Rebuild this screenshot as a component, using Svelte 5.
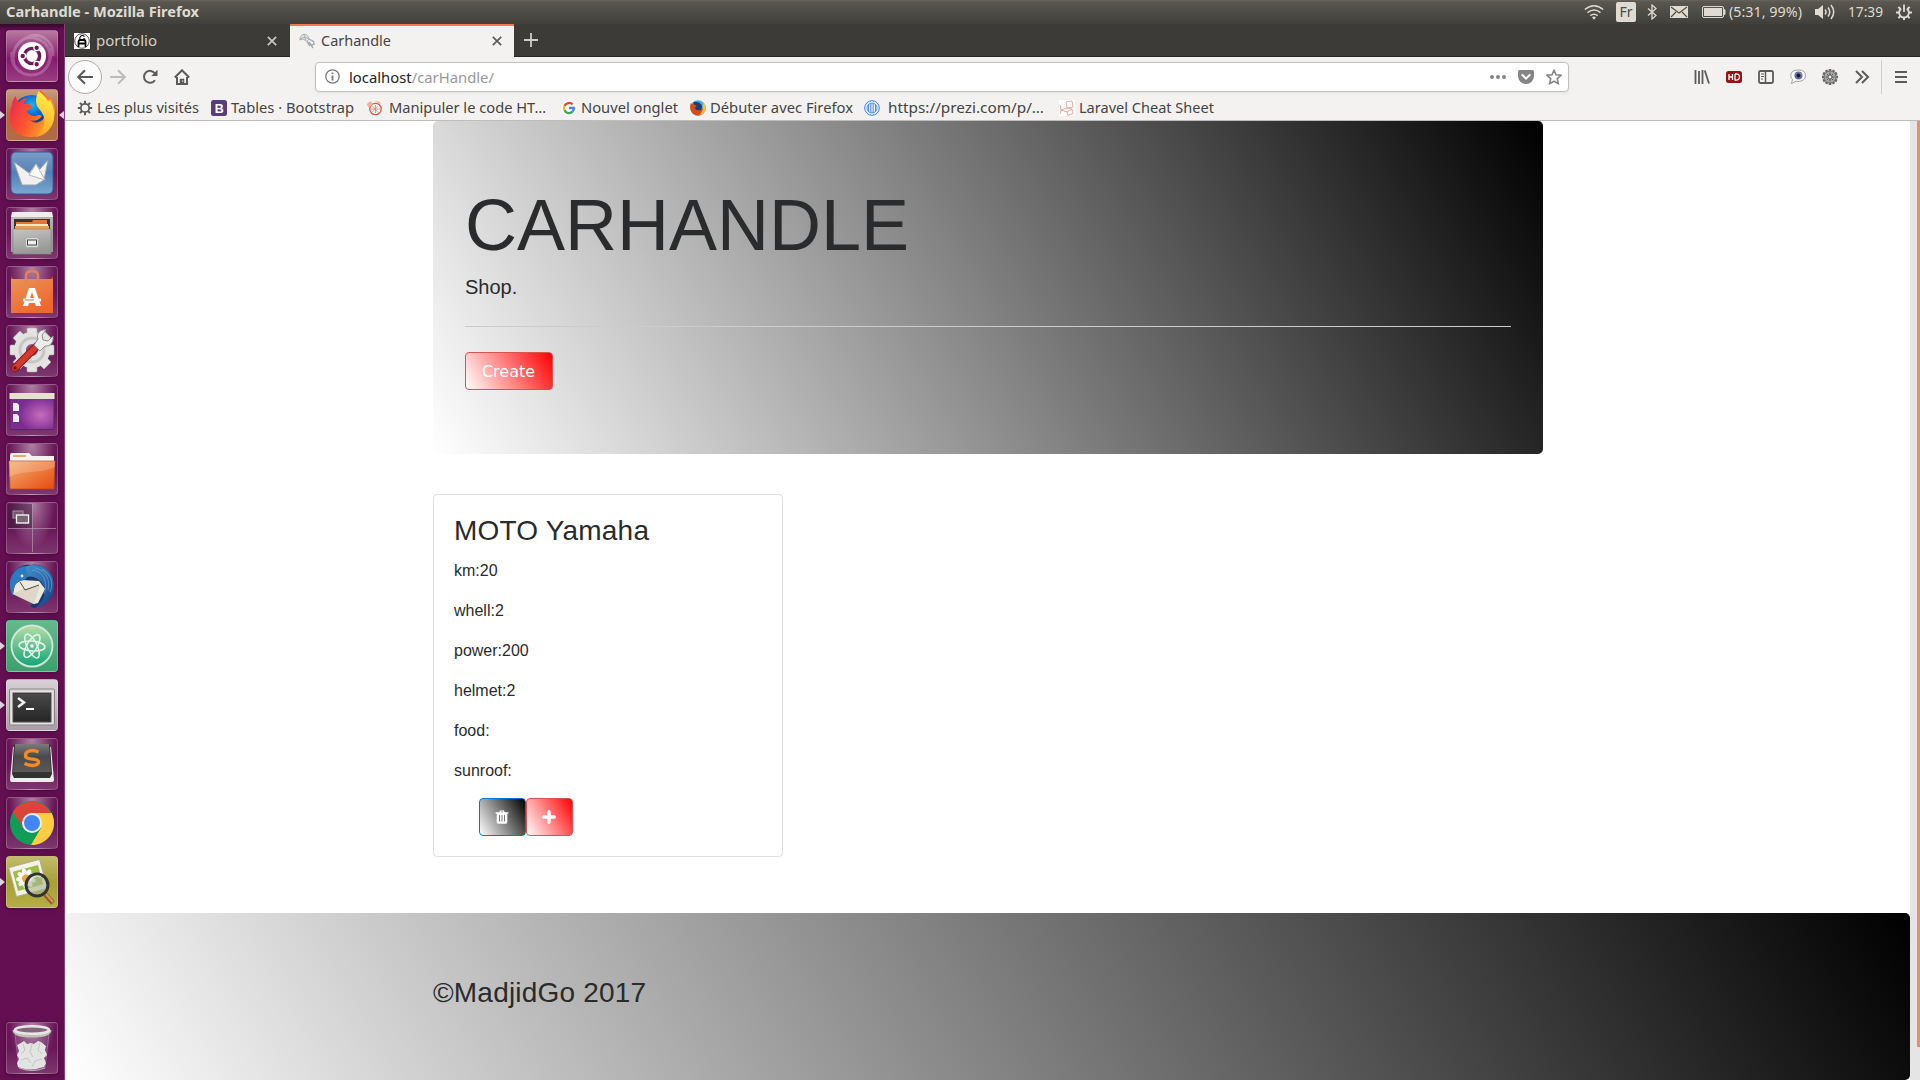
<script>
  const launchers = [
    { id: 'dash', kind: 'dash' },
    { id: 'firefox', kind: 'brown', running: true, focused: true },
    { id: 'boat' },
    { id: 'files' },
    { id: 'software' },
    { id: 'settings' },
    { id: 'desktop' },
    { id: 'folder' },
    { id: 'workspace' },
    { id: 'thunderbird' },
    { id: 'atom', kind: 'green', running: true },
    { id: 'terminal', kind: 'silver', running: true },
    { id: 'sublime' },
    { id: 'chrome' },
    { id: 'viewer', kind: 'olive', running: true }
  ];

  const bookmarks = [
    { icon: 'gear', text: 'Les plus visités', width: 102, slot: 134 },
    { icon: 'bootstrap', text: 'Tables · Bootstrap', width: 123, slot: 155 },
    { icon: 'oc', text: 'Manipuler le code HT…', width: 157, slot: 195, gap: 7 },
    { icon: 'google', text: 'Nouvel onglet', width: 97, slot: 129 },
    { icon: 'firefox', text: 'Débuter avec Firefox', width: 143, slot: 174 },
    { icon: 'prezi', text: 'https://prezi.com/p/…', width: 156, slot: 195, gap: 8 },
    { icon: 'laravel', text: 'Laravel Cheat Sheet', width: 135, slot: 160 }
  ];

  const specs = ['km:20', 'whell:2', 'power:200', 'helmet:2', 'food:', 'sunroof:'];
  const teeth = [0, 45, 90, 135, 180, 225, 270, 315];
  const fineTeeth = [0, 30, 60, 90, 120, 150, 180, 210, 240, 270, 300, 330];
  const petals = [0, 40, 80, 120, 160, 200, 240, 280, 320];
</script>

{#snippet label(text, width, tone = 'ink')}
  <svg class="label {tone}" {width} height="20"><text x="0" y="15" textLength={width} lengthAdjust="spacingAndGlyphs">{text}</text></svg>
{/snippet}

{#snippet firefoxLogo()}
  <circle cx="26" cy="26" r="20" fill="url(#ffBlue)" />
  <path d="M6 16C6 12 8 9 10 7c0 3 1 5 3 6 2-2 5-4 8-4-2 2-3 4-3 6 3 0 6 0 8 2-1 3-4 4-6 6 3 1 4 4 8 4 3 0 6-2 8 0-3 4-8 6-12 4 4 4 11 3 14-2 4-6 1-14-5-19-1-5 0-7 1-9 3 3 7 6 9 9l1-2c4 6 6 12 4 20-2 11-10 20-22 20C12 48 3 40 4 28c0-5 0-8 2-12z" fill="url(#ffFlame)" />
  <path d="M33 2c3 3 7 6 9 10l2-1c5 9 6 19 1 27-4 6-9 9-15 10 8-7 11-17 6-24-2-4-6-6-6-12 0-4 1-7 3-10z" fill="url(#ffYellow)" />
{/snippet}

{#snippet launcherIcon(id)}
  <svg class="art" viewBox="0 0 52 52">
    {#if id === 'dash'}
      <path d="M8 34C4 16 18 2 34 10c10 5 12 16 8 24M44 18c4 14-6 28-20 27C12 44 4 34 6 22M20 8c14-8 28 4 27 18" fill="none" stroke="#fff" stroke-opacity=".22" stroke-width="3" />
      <circle cx="26" cy="26" r="14" fill="#fff" />
      <circle cx="26" cy="26" r="7.600" fill="none" stroke="#6d1b59" stroke-width="3.400" />
      <g fill="#6d1b59" stroke="#fff" stroke-width="1.200">
        <circle cx="16.700" cy="26" r="2.800" /><circle cx="30.700" cy="17.800" r="2.800" /><circle cx="30.700" cy="34.200" r="2.800" />
      </g>
    {:else if id === 'firefox'}
      {@render firefoxLogo()}
    {:else if id === 'boat'}
      <rect x="5" y="4" width="42" height="42" rx="5" fill="url(#boatBg)" stroke="#2e5c9b" />
      <path d="M8 14l15 11 7-9 4 5 8-9-4 20-8 5H16z" fill="#f0f0ee" stroke="#9aa5b0" />
      <path d="M23 27l7-11 9 16z" fill="#fbfbfa" stroke="#b0b8bf" />
    {:else if id === 'files'}
      <path d="M7 5h38l2 6v34H5V11z" fill="url(#metal)" />
      <path d="M6 5h40l1 5H5z" fill="#eee" />
      <rect x="8" y="12" width="36" height="11" fill="#383432" />
      <path d="M10 15h16l1-2h14v8H10z" fill="#df7640" />
      <path d="M10 17h32v4H10z" fill="#f7e6c8" /><path d="M9 19h34v4H9z" fill="#ea9e51" />
      <path d="M7 22h38v25H7z" fill="url(#metal)" stroke="#888" stroke-width=".7" />
      <rect x="19.500" y="30.500" width="13" height="10" rx="2" fill="#ddd" stroke="#aaa" />
      <rect x="21.500" y="33" width="9" height="5" fill="#eee" stroke="#444" />
    {:else if id === 'software'}
      <path d="M5 10l4 4H5zm42 0l-4 4h4z" fill="#b8431c" />
      <rect x="5" y="13" width="42" height="34" fill="url(#bag)" />
      <path d="M20 17v-7q0-5 6-5t6 5v7" fill="none" stroke="#e68157" stroke-width="2.500" />
      <path d="M17 40h5l1-3h6l1 3h5L29 22h-6zm7-8l2-6 2 6z" fill="#fff" />
      <path d="M17 34h18" stroke="#fff" stroke-width="3" /><path d="M19 34h9" stroke="#f07337" />
    {:else if id === 'settings'}
      <g fill="#e5e5e3" stroke="#a8a8a6" stroke-width=".6">
        {#each teeth as a}<rect x="21" y="3" width="10" height="12" rx="1" transform="rotate({a} 26 25)" />{/each}
      </g>
      <circle cx="26" cy="25" r="12" fill="none" stroke="#e2e2e0" stroke-width="12" />
      <circle cx="26" cy="25" r="12" fill="none" stroke="#c6c6c4" stroke-width="3" />
      <path d="M9 43L31 21" stroke="#871b17" stroke-width="8" stroke-linecap="round" />
      <path d="M9 43L31 21" stroke="#d3392f" stroke-width="6" stroke-linecap="round" />
      <path d="M28 20l6 6 5-5c5 1 9-4 8-10l-5 5-5-1-1-5 4-5c-6-1-10 4-8 9z" fill="#ededeb" stroke="#8d8d8b" />
      <circle cx="9" cy="43" r="1.800" fill="#701514" />
    {:else if id === 'desktop'}
      <rect x="4" y="9.500" width="44" height="36" rx="1" fill="url(#desk)" stroke="#5c2468" />
      <rect x="3.500" y="9" width="45" height="6" fill="#e4e2cd" />
      <path d="M7 19h4l2 2v6H7zm0 11h4l2 2v6H7z" fill="#eee" />
    {:else if id === 'folder'}
      <path d="M4 12q0-2 2-2h17l3 3h22v10H4z" fill="#f4f3f1" /><path d="M7 12h13v2H7z" fill="#efa477" />
      <path d="M3 18h46l-1 28H4z" fill="url(#folder)" stroke="#b84818" stroke-width=".7" />
      <path d="M3 18h46v6C34 31 16 27 3 34z" fill="#fff" opacity=".18" />
    {:else if id === 'workspace'}
      <path d="M2 2h24v24H2z" fill="#3c1735" opacity=".5" />
      <path d="M26.500 2v48M2 26.500h48" stroke="#b794b0" stroke-opacity=".7" />
      <rect x="7" y="9" width="10" height="7" fill="#74566f" stroke="#a493a1" />
      <rect x="10.500" y="13" width="12" height="8" fill="#796475" stroke="#fff" stroke-width="1.300" />
    {:else if id === 'thunderbird'}
      <path d="M6 14C10 8 16 3 24 4c12-3 23 6 24 20 0 11-6 20-20 23l-4-2 8-6L9 20z" fill="#17386f" />
      <path d="M11 20c-1-7 3-13 10-15 14-4 26 4 27 18 1 12-6 21-18 24 8-8 11-16 7-23-3-6-10-10-16-8-2 3-5 5-10 4z" fill="url(#bird)" />
      <path d="M9 23l7-4 17 1 6 8-7 14-4 1-21-10z" fill="#eee9df" />
      <path d="M7 33l10-5 17-3-6 18z" fill="#ddd6c9" />
      <path d="M14 21l5 8 14-5" fill="none" stroke="#4d4944" stroke-width="1" />
      <path d="M19 5c-9 1-16 10-15 20 0 4 1 7 3 10 0-7 2-12 6-15 4 0 8-2 9-6z" fill="#2f7abf" />
      <path d="M29 7c9 2 16 10 13 22M26 9c11 1 17 12 12 24M36 8c8 5 12 13 8 23" fill="none" stroke="#7fbbe8" stroke-opacity=".45" stroke-width="1.200" />
      <circle cx="16" cy="15" r="1.400" fill="#e8eef5" />
    {:else if id === 'atom'}
      <circle cx="26" cy="26" r="20.500" fill="url(#atomBg)" stroke="#d4e8d7" stroke-width="1.800" />
      <g fill="none" stroke="#e4f8ed" stroke-width="1.500">
        <ellipse cx="26" cy="26" rx="13" ry="5" transform="rotate(5 26 26)" />
        <ellipse cx="26" cy="26" rx="13" ry="5" transform="rotate(64 26 26)" />
        <ellipse cx="26" cy="26" rx="13" ry="5" transform="rotate(121 26 26)" />
      </g><circle cx="26" cy="26" r="1.800" fill="#fff" />
    {:else if id === 'terminal'}
      <rect x="3.500" y="10" width="45" height="36" rx="1" fill="#d6d6d4" stroke="#8a8588" />
      <rect x="6" y="13" width="40" height="31" fill="#3d3e3d" stroke="#f3f3f1" />
      <rect x="8" y="15" width="36" height="27" fill="url(#term)" />
      <path d="M12 19l6 4.500-6 4.500" fill="none" stroke="#f2f2f0" stroke-width="2.500" /><path d="M20 30h8" stroke="#fff" stroke-width="2" />
    {:else if id === 'sublime'}
      <path d="M7 9h38l3 33q0 2-2 2H6q-2 0-2-2z" fill="#eeedec" />
      <path d="M8 6h36l2 30-2 4H8l-2-4z" fill="#353332" />
      <path d="M9 6h34l2 28H7z" fill="url(#key)" />
      <path d="M32.500 14c-7-3-13-1-13 3.500 0 5.500 13 2 13 6.500 0 4-8 4.500-14 1.500" fill="none" stroke="#f38a27" stroke-width="3.400" />
    {:else if id === 'chrome'}
      <circle cx="26" cy="26" r="22" fill="#0f9d58" />
      <path d="M7 15a22 22 0 0 1 38 1H26l-9 15z" fill="#db4437" />
      <path d="M26 16h19.600A22 22 0 0 1 25 48l10-17z" fill="#ffcd40" />
      <circle cx="26" cy="26" r="10" fill="#f1f1f1" /><circle cx="26" cy="26" r="8" fill="#4285f4" />
    {:else if id === 'viewer'}
      <g transform="rotate(-15 22 22)">
        <rect x="6" y="7" width="32" height="30" fill="#f3f2e8" stroke="#b2ac8f" />
        <rect x="9" y="12" width="26" height="20" fill="#9ebd47" />
        {#each petals as a}<ellipse cx="20" cy="17" rx="2.500" ry="5" fill="#fff" transform="rotate({a} 20 22)" />{/each}
        <circle cx="20" cy="22" r="4" fill="#f3a728" />
      </g>
      <path d="M39 38l8 9" stroke="#965c29" stroke-width="5" /><path d="M40 38l7 8" stroke="#d79b5c" stroke-width="2" />
      <circle cx="31" cy="29" r="11" fill="#a9b490" fill-opacity=".6" stroke="#2f3231" stroke-width="3" />
      <path d="M24 25a8 8 0 0 1 11-4" fill="none" stroke="#fff" stroke-opacity=".5" stroke-width="2" />
    {:else if id === 'trash'}
      <path d="M9 12h34l-4 34q-13 5-26 0z" fill="#fff" fill-opacity=".08" stroke="#d7c8d4" stroke-opacity=".35" />
      <path d="M11 23l4-2 3-2 3 3 4-1 3 1 4-3 3 1 5 4-1 4 2 5-3 3 2 5-2 4-4 1q-9 3-19 0l-3-1-1-4 2-4-2-4 2-4z" fill="#e2e4e1" />
      <path d="M17 22l2 6-4 4M26 22l-2 8 3 5M34 21l-2 7 4 4M15 38l6-2 4 5M36 37l-7 2-3 6" fill="none" stroke="#c3c5c1" stroke-width="1" />
      <path d="M13 46q13 5 26 0" fill="none" stroke="#c8c9c4" stroke-opacity=".7" />
      <path d="M8 8q0 6 18 6t18-6" fill="none" stroke="#bfc3bc" stroke-width="3" />
      <ellipse cx="26" cy="8" rx="17" ry="3.800" fill="#86657f" stroke="#e6e9e4" stroke-width="2.600" />
    {/if}
  </svg>
{/snippet}

<svg class="defs" width="0" height="0" aria-hidden="true">
  <defs>
    <radialGradient id="ffBlue" cx=".5" cy=".25"><stop offset="0" stop-color="#22b5ec" /><stop offset=".5" stop-color="#0a6bd6" /><stop offset="1" stop-color="#123079" /></radialGradient>
    <linearGradient id="ffFlame" x1="0" y1=".3" x2="1" y2=".8"><stop offset="0" stop-color="#e82d4b" /><stop offset=".45" stop-color="#ff562d" /><stop offset="1" stop-color="#ffbd27" /></linearGradient>
    <linearGradient id="ffYellow" x1=".5" y1="0" x2=".3" y2="1"><stop offset="0" stop-color="#fff44a" /><stop offset="1" stop-color="#ff9f20" /></linearGradient>
    <linearGradient id="boatBg" x2="0" y2="1"><stop offset="0" stop-color="#7c9cc8" /><stop offset=".5" stop-color="#5580b5" /><stop offset="1" stop-color="#7ba8d2" /></linearGradient>
    <linearGradient id="metal" x2=".3" y2="1"><stop offset="0" stop-color="#c5c5c3" /><stop offset="1" stop-color="#989896" /></linearGradient>
    <linearGradient id="bag" x2=".6" y2="1"><stop offset="0" stop-color="#e99456" /><stop offset="1" stop-color="#ef672d" /></linearGradient>
    <radialGradient id="desk" cx=".7" cy=".6"><stop offset="0" stop-color="#c66cbd" /><stop offset="1" stop-color="#7b2c91" /></radialGradient>
    <linearGradient id="folder" x2="1" y2="1"><stop offset="0" stop-color="#f3b172" /><stop offset="1" stop-color="#e8480e" /></linearGradient>
    <linearGradient id="bird" x2="1" y2="1"><stop offset="0" stop-color="#4c9bd7" /><stop offset="1" stop-color="#153c83" /></linearGradient>
    <linearGradient id="atomBg" x2="0" y2="1"><stop offset="0" stop-color="#b6dda7" /><stop offset="1" stop-color="#12a477" /></linearGradient>
    <linearGradient id="term" x2="0" y2="1"><stop offset="0" stop-color="#484948" /><stop offset="1" stop-color="#252625" /></linearGradient>
    <linearGradient id="key" x2="0" y2="1"><stop offset="0" stop-color="#7b7979" /><stop offset=".45" stop-color="#4b4a4a" /><stop offset="1" stop-color="#5b5959" /></linearGradient>
  </defs>
</svg>

<div class="screen">
  <header class="panel">
    <div class="window-title">{@render label('Carhandle - Mozilla Firefox', 193, 'light bold')}</div>
    <div class="tray">
      <svg class="wifi" width="20" height="16" viewBox="0 0 20 16" fill="none" stroke="#dfdbd2" stroke-width="1.500"><path d="M.8 5.500Q10-2 19.200 5.500M3.500 8.600q6.500-5.200 13 0M6.300 11.600q3.700-2.800 7.400 0" /><path d="M8 13.200q2-1.500 4 0l-2 2.600z" fill="#dfdbd2" stroke="none" /></svg>
      <div class="lang">Fr</div>
      <svg class="bt" width="10" height="16" viewBox="0 0 10 16" fill="none" stroke="#dfdbd2" stroke-width="1.300"><path d="M1 4.500l8 7L5 15V1l4 3.500-8 7" /></svg>
      <svg class="mail" width="18" height="12" viewBox="0 0 18 12"><rect width="18" height="12" fill="#dfdbd2" /><path d="M1 1l8 6 8-6M1 11l5-5M17 11l-5-5" fill="none" stroke="#504e47" stroke-width="1.200" /></svg>
      <svg class="batt" width="24" height="12" viewBox="0 0 24 12"><rect x=".5" y=".5" width="21" height="11" rx="1.500" fill="none" stroke="#dfdbd2" /><rect x="2" y="2" width="18" height="8" fill="#dfdbd2" /><path d="M22 3q1.500 0 1.500 1.500v3Q23.500 9 22 9z" fill="#dfdbd2" /></svg>
      <div class="batt-text">{@render label('(5:31, 99%)', 73, 'light')}</div>
      <svg class="vol" width="20" height="16" viewBox="0 0 20 16"><path d="M0 5h3l5-4v14l-5-4H0z" fill="#dfdbd2" /><path d="M10 5.500q2 2.500 0 5M13 3.500q3.500 4.500 0 9M16 1q5.500 7 0 14" fill="none" stroke="#dfdbd2" stroke-width="1.500" /></svg>
      <div class="clock">{@render label('17:39', 35, 'light')}</div>
      <svg class="power" width="16" height="16" viewBox="0 0 16 16" stroke="#dfdbd2" fill="none"><path d="M5.200 4.600a4.900 4.900 0 1 0 5.600 0" stroke-width="1.900" />{#each teeth.slice(1) as a}<path d="M8 .5v3" stroke-width="2" transform="rotate({a} 8 8.500)" />{/each}<path d="M8 .5v7.500" stroke-width="1.800" /></svg>
    </div>
  </header>

  <div class="workspace">
    <nav class="dock">
      {#each launchers as app}
        <div class="tile {app.kind ?? 'glass'}" class:running={app.running} class:focused={app.focused}>
          {@render launcherIcon(app.id)}
        </div>
      {/each}
      <div class="tile glass bin">{@render launcherIcon('trash')}</div>
    </nav>

    <div class="browser">
      <div class="tabs">
        <div class="tab">
          <svg width="16" height="16" viewBox="0 0 16 16"><rect width="16" height="16" fill="#fff" /><circle cx="8" cy="8" r="7.300" fill="none" stroke="#555" /><path d="M4.500 14V9q0-2 1.500-2h4q1.500 0 1.500 2v5M4.500 10.500h7" fill="none" stroke="#000" stroke-width="1.800" /><path d="M10.500 3.500q-2.500-2-4 0t0 3h3.500V5" fill="none" stroke="#000" stroke-width="1.200" /></svg>
          {@render label('portfolio', 61, 'pale')}
          <svg class="close" width="10" height="10" viewBox="0 0 10 10"><path d="M.8.8l8.400 8.400M9.200.8L.8 9.200" stroke="#c9c7c0" stroke-width="1.700" /></svg>
        </div>
        <div class="tab active">
          <svg width="16" height="16" viewBox="0 0 16 16" fill="none" stroke="#a3abb1" stroke-width=".9"><path d="M.8 7Q1 2 5 1.200 9 1 10 6L8 8.500 4 6z" fill="#e3e6e8" /><path d="M1 6l5-2 4 2M5 1.500L6.500 7" /><path d="M8 8.500l3 4.500M10 6l4.500 2.500.5 3-3 .5-2-3M12 12l2 3" stroke-width="1.400" /></svg>
          {@render label('Carhandle', 70)}
          <svg class="close" width="10" height="10" viewBox="0 0 10 10"><path d="M.8.8l8.400 8.400M9.200.8L.8 9.200" stroke="#5c5b58" stroke-width="1.700" /></svg>
        </div>
        <svg class="plus" width="14" height="14" viewBox="0 0 14 14"><path d="M7 0v14M0 7h14" stroke="#d0cec8" stroke-width="1.800" /></svg>
      </div>

      <div class="toolbar">
        <div class="back"><svg width="16" height="16" viewBox="0 0 16 16" fill="none" stroke="#5b5b59" stroke-width="2"><path d="M16 8H1.500M8 1.200L1.200 8 8 14.800" /></svg></div>
        <svg class="nav" width="16" height="16" viewBox="0 0 16 16" fill="none" stroke="#bdbcba" stroke-width="2"><path d="M0 8h14.500M8 1.200L14.800 8 8 14.800" /></svg>
        <svg class="nav" width="16" height="16" viewBox="0 0 16 16"><path d="M13 11.200A6 6 0 1 1 13 4.500" fill="none" stroke="#5b5b59" stroke-width="2" /><path d="M15.500.8V7H9.300z" fill="#5b5b59" /></svg>
        <svg class="nav" width="16" height="16" viewBox="0 0 16 16" fill="none" stroke="#5b5b59" stroke-width="2"><path d="M.8 8.500L8 1.300l7.200 7.200M3 8v7h10V8" /><path d="M6 15v-5h4v5z" fill="#5b5b59" stroke-width=".5" /><path d="M8.700 11.500v1.200" stroke="#fff" stroke-width="1" /></svg>
        <div class="address">
          <svg width="15" height="15" viewBox="0 0 15 15"><circle cx="7.500" cy="7.500" r="6.700" fill="none" stroke="#777" stroke-width="1.200" /><path d="M7.500 6.500v5M7.500 3.500v1.600" stroke="#777" stroke-width="1.800" /></svg>
          <svg class="label url" width="145" height="20"><text x="0" y="16" textLength="145" lengthAdjust="spacingAndGlyphs">localhost<tspan>/carHandle/</tspan></text></svg>
          <div class="actions">
            <svg width="16" height="16" viewBox="0 0 16 16" fill="#858585"><circle cx="2" cy="8" r="2" /><circle cx="8" cy="8" r="2" /><circle cx="14" cy="8" r="2" /></svg>
            <svg width="16" height="16" viewBox="0 0 16 16"><path d="M1.500 1h13Q16 1 16 2.500V7a8 8 0 0 1-16 0V2.500Q0 1 1.500 1z" fill="#858585" /><path d="M4.300 6L8 9.500 11.700 6" fill="none" stroke="#fff" stroke-width="2" stroke-linecap="round" /></svg>
            <svg width="16" height="16" viewBox="0 0 16 16"><path d="M8 1.300l2 4.500 5 .5-3.700 3.300 1 5L8 12.200l-4.300 2.400 1-5L1 6.300l5-.5z" fill="none" stroke="#858585" stroke-width="1.600" /></svg>
          </div>
        </div>
        <div class="addons">
          <svg width="16" height="16" viewBox="0 0 16 16" stroke="#5b5b59" stroke-width="1.800"><path d="M1.500 1v14M5 2v13M8.500 1v14M10.800 1.500L15 14.500" /></svg>
          <svg width="16" height="16" viewBox="0 0 16 16"><rect y="2" width="16" height="12" rx="2.500" fill="#931414" /><path d="M3 5v6M6.500 5v6M3 8h3.500M9 5v6q4.500.500 4.500-3T9 5" fill="none" stroke="#fff" stroke-width="1.300" /></svg>
          <svg width="16" height="16" viewBox="0 0 16 16" fill="none" stroke="#5b5b59"><rect x="1" y="2" width="14" height="12" rx="1.500" stroke-width="1.800" /><path d="M7.500 2v12" stroke-width="1.500" /><path d="M3 5h3M3 7.500h3M3 10h2" /></svg>
          <svg width="16" height="16" viewBox="0 0 16 16"><path d="M8.500 1q7 0 7 5.500T8 12.500q-1 0-2-.3L1.500 14.500l1-4Q.8 9 .8 6.500.8 1 8.500 1z" fill="#fff" stroke="#9f9f9d" /><circle cx="8.500" cy="6.500" r="4" fill="#5f6ea3" /><circle cx="8.500" cy="6.500" r="2" fill="#201c27" /><path d="M9.500 4q2 0 2 2" stroke="#d88962" fill="none" /></svg>
          <svg width="16" height="16" viewBox="0 0 16 16">{#each fineTeeth as a}<path d="M8 0v4" stroke="#666" stroke-width="2.600" transform="rotate({a} 8 8)" />{/each}<circle cx="8" cy="8" r="6" fill="#a8a8a6" stroke="#6f6f6d" /><circle cx="8" cy="8" r="2" fill="#f1f1f0" stroke="#555" /><path d="M3.500 8H6M10 8h2.500M8 3.500V6M8 10v2.500M5 5l1.500 1.500M11 5L9.500 6.500M5 11l1.500-1.500M11 11L9.500 9.500" stroke="#5a5a58" /></svg>
          <svg width="16" height="16" viewBox="0 0 16 16" fill="none" stroke="#5b5b59" stroke-width="2"><path d="M2 2l6 6-6 6M8 2l6 6-6 6" /></svg>
        </div>
        <div class="divider"></div>
        <svg class="menu" width="12" height="14" viewBox="0 0 12 14" stroke="#5b5b59" stroke-width="2"><path d="M0 2h12M0 7h12M0 12h12" /></svg>
      </div>

      <div class="bookmarks">
        {#each bookmarks as b}
          <svg class="slot" width={b.slot} height="20">
            <svg y="2" width="16" height="16" viewBox="0 0 16 16">
              {#if b.icon === 'gear'}
                {#each teeth as a}<path d="M8 .8v3" stroke="#5b5b59" stroke-width="2" transform="rotate({a} 8 8)" />{/each}
                <circle cx="8" cy="8" r="4.200" fill="none" stroke="#5b5b59" stroke-width="1.800" />
              {:else if b.icon === 'bootstrap'}
                <rect width="16" height="16" rx="2.500" fill="#563d7c" /><text class="mark" x="3.700" y="12.500">B</text>
              {:else if b.icon === 'oc'}
                <circle cx="9.500" cy="9" r="5.700" fill="#fff" stroke="#cf5a45" stroke-width="1.300" />
                <path d="M1 5q0-3 4-3.500L7 4 3 8zM9 1.500q5-1 6 3" fill="#f0b09c" /><path d="M6 5.500l6 7M5 9h9M9.500 5v8M6.500 12l5.500-6" stroke="#d9806c" fill="none" stroke-width=".8" />
              {:else if b.icon === 'google'}
                <circle cx="8" cy="8" r="8" fill="#fff" />
                <g fill="none" stroke-width="2.300"><path d="M11.600 4.400A5 5 0 0 0 3.500 5.900" stroke="#ea4335" /><path d="M3.500 5.900a5 5 0 0 0 0 4.300" stroke="#fbbc05" /><path d="M3.500 10.200a5 5 0 0 0 8 1.500" stroke="#34a853" /><path d="M11.500 11.700A5 5 0 0 0 13 8H8" stroke="#4285f4" /></g>
              {:else if b.icon === 'firefox'}
                <svg width="16" height="16" viewBox="3 3 46 46"><circle cx="26" cy="26" r="22" fill="#45b4e0" /><path d="M12 10q14-6 24 6 4 12-4 20l-14-4z" fill="#1d3f78" /><path d="M5 12q5 3 11 4l6 4-6 6q6 10 18 6 8-4 8-18l4 4q5 12-3 22-14 14-30 3Q-1 32 5 12z" fill="#de4a16" /><path d="M42 9q11 14 3 28-6 9-16 10 13-12 11-26z" fill="#fdc036" /></svg>
              {:else if b.icon === 'prezi'}
                <g fill="none" stroke="#3181ff"><circle cx="8" cy="8" r="7.300" /><circle cx="8" cy="8" r="5" stroke-width=".8" /><path d="M4.500 4v8M6.800 3v10M9.200 3v10M11.500 4v8" stroke-width=".9" /></g>
              {:else}
                <rect width="16" height="16" fill="#fff" /><path d="M1 5l1 5 6-2 5 1-5 3-6-2M8 8L7 2l6-1 1 6-6 1M8 12l1 3.500 5-2-1-4.500M2 10L1 14" fill="none" stroke="#dfa49c" stroke-width=".9" />
              {/if}
            </svg>
            <text class="bm-text" x={(b.gap ?? 4) + 16} y="15" textLength={b.width} lengthAdjust="spacingAndGlyphs">{b.text}</text>
          </svg>
        {/each}
      </div>

      <div class="viewport">
        <main class="page">
          <section class="hero container">
            <h1>CARHANDLE</h1>
            <p class="lead">Shop.</p>
            <hr />
            <button class="btn create">Create</button>
          </section>

          <section class="container listing">
            <article class="card">
              <h3>MOTO Yamaha</h3>
              {#each specs as line}<p>{line}</p>{/each}
              <div class="card-actions">
                <button class="btn delete" aria-label="Delete"><svg width="14" height="14" viewBox="0 0 14 14"><path d="M.5 2.200h3.800L5 .5h4l.7 1.700h3.800v1.300h-1.200V12q0 1.700-1.500 1.700H3.200Q1.700 13.700 1.700 12V3.500H.5z" fill="#fff" /><path d="M5.700 2.200l.3-.7h2l.3.7z" fill="#777" /><path d="M4.500 5v6.500M7 5v6.500M9.500 5v6.500" stroke="#777" stroke-width="1" /></svg></button>
                <button class="btn add" aria-label="Add"><svg width="14" height="14" viewBox="0 0 14 14"><path d="M7 1.700v10.600M1.700 7h10.600" stroke="#fff" stroke-width="3.300" stroke-linecap="round" /></svg></button>
              </div>
            </article>
          </section>

          <footer class="footer"><div class="container"><h3>©MadjidGo 2017</h3></div></footer>
        </main>
        <div class="scrollbar"><div class="thumb"></div></div>
      </div>
    </div>
  </div>
</div>

<style>
  :global(body) { margin: 0; overflow: hidden; }
  .screen, .screen :global(*) { box-sizing: border-box; }
  .screen { width: 1920px; height: 1080px; display: flex; flex-direction: column; overflow: hidden; font-family: "Liberation Sans", sans-serif; color: #292b2c; background: #fff; }
  .defs { position: absolute; }
  svg { display: block; flex: none; }
  .label text, .bm-text { font-family: "Noto Sans", "Open Sans", sans-serif; font-size: 14.500px; fill: #444442; }
  .label.light text { fill: #dfdbd2; font-size: 14px; }
  .label.pale text { fill: #d3d0c7; }
  .label.bold text { font-weight: 700; }
  .label.url text { fill: #222; font-size: 15px; }
  .label.url tspan { fill: #999; }

  .panel { height: 24px; flex: none; display: flex; justify-content: space-between; padding: 0 8px 0 6px; background: linear-gradient(#66645a 0, #59574f 2px, #403f3a 24px); }
  .window-title { padding-top: 2px; }
  .tray { display: flex; align-items: center; height: 24px; }
  .lang { width: 20px; height: 20px; margin: 0 11px 0 12px; border-radius: 2px; background: #dfdbd2; color: #4b4943; font: 14px/20px "Noto Sans", sans-serif; text-align: center; }
  .mail { margin-left: 13px; }
  .batt { margin-left: 14px; }
  .batt-text { margin: -1px 13px 0 3px; }
  .clock { margin: -1px 13px 0 13px; }

  .workspace { flex: 1; display: flex; min-height: 0; }
  .dock { width: 65px; flex: none; display: flex; flex-direction: column; gap: 7px; padding: 6px 0 6px 6px; border-right: 1px solid #83427a; background: linear-gradient(#35082b 0, #640f52 6px); }
  .tile { position: relative; width: 52px; height: 52px; flex: none; border: 1px solid rgba(255, 255, 255, .2); border-radius: 4px; box-shadow: 0 1px 4px rgba(30, 0, 25, .4); }
  .art { width: 52px; height: 52px; margin: -1px; }
  .glass { background: radial-gradient(ellipse at 50% 0, rgba(255, 255, 255, .48), rgba(255, 255, 255, .03) 65%), linear-gradient(transparent 50%, rgba(255, 255, 255, .14)); }
  .dash { background: linear-gradient(#b7799f, #86196e 55%, #9a3d83); }
  .brown { background: linear-gradient(#c59b83, #b2673f 50%, #b26c48); }
  .green { background: linear-gradient(#65b98b, #3da06e); }
  .silver { background: linear-gradient(#d8d0d6, #a99da7); }
  .olive { background: linear-gradient(#c2bb6b, #a6a033 50%, #b5ae48); }
  .bin { margin-top: auto; }
  .running::before, .focused::after { content: ""; position: absolute; top: 21px; border: 4px solid transparent; }
  .running::before { left: -7px; border-left: 5px solid #dfd2dc; border-right: 0; }
  .focused::after { right: -7px; border-right: 5px solid #dfd2dc; border-left: 0; }

  .browser { flex: 1; min-width: 0; display: flex; flex-direction: column; background: #f3f2f1; }
  .tabs { height: 33px; flex: none; display: flex; align-items: flex-end; background: linear-gradient(#3c3b37 32px, #262522 32px); }
  .tab { width: 225px; height: 32px; display: flex; align-items: center; gap: 6px; padding: 0 13px 1px 9px; }
  .close { margin-left: auto; }
  .active { height: 33px; border-top: 2px solid #f27b4d; background: #f3f2f1; width: 224px; padding: 0 12px 2px 9px; }
  .plus { margin: 0 0 10px 10px; }

  .toolbar { height: 39px; flex: none; display: flex; align-items: center; padding-left: 3px; }
  .back { width: 34px; height: 34px; margin-right: 8px; flex: none; border: 1px solid #adaba8; border-radius: 50%; background: #fcfcfc; display: grid; place-items: center; }
  .nav { margin-right: 16px; }
  .address { width: 1254px; height: 30px; flex: none; margin-left: 109px; padding: 0 6px 0 9px; border: 1px solid #c3c0bc; border-radius: 4px; background: #fff; box-shadow: 0 1px 3px rgba(0, 0, 0, .06); display: flex; align-items: center; gap: 9px; }
  .actions { margin-left: auto; display: flex; gap: 12px; }
  .addons { margin-left: 125px; display: flex; gap: 16px; }
  .divider { width: 1px; height: 34px; margin: 0 13px 0 11px; background: #d1cfcc; }

  .bookmarks { height: 25px; flex: none; display: flex; align-items: flex-start; padding: 2px 0 0 12px; border-bottom: 1px solid #bfbdb9; }
  .mark { font: 700 12.500px "Liberation Sans", sans-serif; fill: #fff; }

  .viewport { flex: 1; min-height: 0; display: flex; background: #fff; }
  .page { flex: 1; min-width: 0; display: flex; flex-direction: column; }
  .container { width: 1110px; margin: 0 0 0 368px; }
  .hero { height: 333px; flex: none; padding: 65px 32px 64px; border-radius: 5px; background: linear-gradient(60deg, #fff, #000); }
  h1 { margin: 0 0 7px; font-size: 72px; font-weight: 300; line-height: 79px; }
  .lead { margin: 0; font-size: 20px; line-height: 30px; }
  hr { height: 1px; margin: 24px 0 25px; border: 0; background: #ccc; }
  .btn { height: 38px; padding: 0; display: grid; place-items: center; border: 1px solid; border-radius: 4px; color: #fff; font: 16px "DejaVu Sans", sans-serif; }
  .create { width: 88px; padding-right: 1px; border-color: #d9534f; background: linear-gradient(60deg, #fff, #f00); }
  .listing { padding-top: 40px; flex: 1; }
  .card { width: 350px; height: 363px; padding: 20px; border: 1px solid #dfdfdf; border-radius: 4px; }
  h3 { margin: 0; font-size: 28px; font-weight: 400; line-height: 31px; letter-spacing: .2px; }
  .card h3 { margin-bottom: 13px; }
  .card p { margin: 0 0 16px; font-size: 16px; line-height: 24px; }
  .card p:last-of-type { margin-bottom: 15px; }
  .card-actions { display: flex; padding-left: 25px; }
  .card-actions .btn { width: 47px; padding-right: 1px; }
  .delete { border-color: #0275d8; background: linear-gradient(60deg, #fff, #000); }
  .add { border-color: #d9534f; background: linear-gradient(60deg, #fff, #f00); }
  .footer { height: 167px; flex: none; padding: 64px 0; border-radius: 5px; background: linear-gradient(60deg, #fff, #000); }
  .scrollbar { width: 10px; flex: none; display: flex; justify-content: flex-end; background: #e5e5e5; }
  .thumb { width: 3px; height: 926px; background: #f28c65; }
</style>
